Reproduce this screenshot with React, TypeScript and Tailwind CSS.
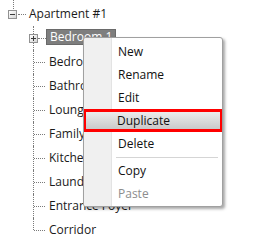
import React from "react";

const children = [
  "Bedroom 2",
  "Bathroom",
  "Lounge",
  "Family",
  "Kitchen",
  "Laundry",
  "Entrance Foyer",
  "Corridor",
];

function ExpandBox({ plus }: { plus?: boolean }) {
  return (
    <span className="relative w-[9px] h-[9px] border border-[#919191] bg-gradient-to-br from-white to-[#d4d4d4] flex items-center justify-center">
      <span className="absolute w-[5px] h-px bg-[#3a3a3a]" />
      {plus && <span className="absolute w-px h-[5px] bg-[#3a3a3a]" />}
    </span>
  );
}

function ChildRow({ label, last }: { label: string; last?: boolean }) {
  return (
    <div className="flex h-6 items-center">
      <div className="relative w-[46px] h-full shrink-0">
        <span
          className={
            "absolute left-[33px] top-0 border-l border-dotted border-[#7a7a7a] " +
            (last ? "h-1/2" : "h-full")
          }
        />
        <span className="absolute left-[34px] top-1/2 w-[11px] border-t border-dotted border-[#7a7a7a]" />
      </div>
      <span className="pl-[3px] text-[#1a1a1a] whitespace-nowrap">{label}</span>
    </div>
  );
}

function MenuItem({ label, disabled }: { label: string; disabled?: boolean }) {
  return (
    <div className="h-[23px] flex items-center pl-[34px]">
      <span className={disabled ? "text-[#8d8d8d]" : "text-[#111]"}>{label}</span>
    </div>
  );
}

export default function App() {
  return (
    <div
      className="relative w-[254px] h-[246px] bg-white overflow-hidden text-[12px] leading-none"
      style={{ fontFamily: '"Open Sans", "Noto Sans", sans-serif' }}
    >
      <div className="pt-[2px]">
        {/* Root row */}
        <div className="flex h-6 items-center">
          <div className="relative w-[26px] h-full shrink-0 flex items-center pl-[8px]">
            <span className="absolute left-[13px] -top-[2px] h-[9px] border-l border-dotted border-[#7a7a7a]" />
            <ExpandBox />
            <span className="w-[8px] ml-px border-t border-dotted border-[#7a7a7a]" />
          </div>
          <span className="pl-[3px] text-[#1a1a1a] whitespace-nowrap">Apartment #1</span>
        </div>

        {/* Selected child row */}
        <div className="flex h-6 items-center">
          <div className="relative w-[46px] h-full shrink-0 flex items-center pl-[29px]">
            <span className="absolute left-[33px] top-0 h-full border-l border-dotted border-[#7a7a7a]" />
            <ExpandBox plus />
            <span className="w-[8px] border-t border-dotted border-[#7a7a7a]" />
          </div>
          <span className="h-[16px] -mt-[2px] flex items-center pl-[3px] pr-[3px] bg-[#7e7e7e] border border-[#6a6a6a] text-white whitespace-nowrap">
            Bedroom 1
          </span>
        </div>

        {children.map((c, i) => (
          <ChildRow key={c} label={c} last={i === children.length - 1} />
        ))}
      </div>

      {/* Context menu */}
      <div className="absolute left-[83px] top-[37px] w-[140px] h-[170px] bg-white border border-[#a0a0a0] rounded-[3px] shadow-[2px_2px_3px_rgba(0,0,0,0.35)] overflow-hidden">
        <div className="absolute left-0 top-0 bottom-0 w-[28px] bg-[#f0f0f0] border-r border-[#e3e3e3]" />
        <div className="relative pt-[2px] flex flex-col">
          <MenuItem label="New" />
          <MenuItem label="Rename" />
          <MenuItem label="Edit" />
          <div className="h-[23px] -mx-px flex items-center pl-[31px] border-[3px] border-[#ff0000] bg-gradient-to-b from-[#ececec] to-[#c9c9c9]">
            <span className="text-[#111]">Duplicate</span>
          </div>
          <MenuItem label="Delete" />
          <div className="h-[4px] flex items-center ml-[32px] mr-[4px]">
            <div className="h-px w-full bg-[#d5d5d5]" />
          </div>
          <MenuItem label="Copy" />
          <MenuItem label="Paste" disabled />
        </div>
      </div>
    </div>
  );
}
